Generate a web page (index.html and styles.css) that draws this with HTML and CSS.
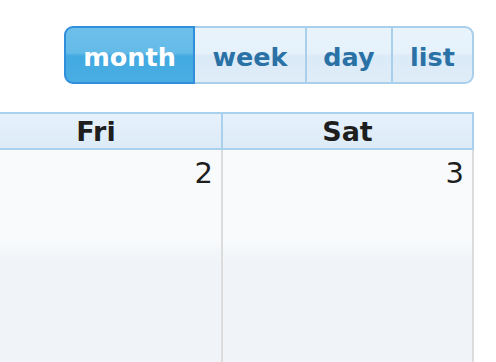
FILE: index.html
```html
<!DOCTYPE html>
<html>
<head>
<meta charset="utf-8">
<link rel="stylesheet" href="styles.css">
</head>
<body>
<div class="page">
  <div class="toolbar">
    <div class="btn-group">
      <button class="btn active">month</button>
      <button class="btn">week</button>
      <button class="btn">day</button>
      <button class="btn">list</button>
    </div>
  </div>
  <div class="calendar">
    <div class="row head">
      <div class="cell hcell">Fri</div>
      <div class="cell hcell">Sat</div>
    </div>
    <div class="row body">
      <div class="cell dcell"><span class="num">2</span></div>
      <div class="cell dcell"><span class="num">3</span></div>
    </div>
  </div>
</div>
</body>
</html>
```

FILE: styles.css
```css
html, body {
  margin: 0;
  padding: 0;
  background: #ffffff;
  overflow: hidden;
}
body {
  width: 496px;
  height: 362px;
  font-family: "DejaVu Sans", "Liberation Sans", sans-serif;
}
.page {
  width: 474px;
  display: flex;
  flex-direction: column;
  align-items: flex-end;
}
.toolbar {
  padding-top: 26px;
  height: 58px;
}
.btn-group {
  display: flex;
  height: 58px;
}
.btn {
  box-sizing: border-box;
  font-family: inherit;
  font-weight: bold;
  font-size: 25.5px;
  color: #2a72a6;
  height: 58px;
  margin: 0 0 0 -2px;
  padding: 3px 0 0 0;
  border: 2px solid #a9cfea;
  background: linear-gradient(to bottom, #e8f3fc 0%, #e6f2fb 46%, #dbeaf7 52%, #dfedf8 100%);
  position: relative;
}
.btn:nth-child(1) { width: 131px; margin-left: 0; border-radius: 9px 0 0 9px; }
.btn:nth-child(2) { width: 114px; }
.btn:nth-child(3) { width: 88px; }
.btn:nth-child(4) { width: 83px; border-radius: 0 9px 9px 0; }
.btn.active {
  color: #ffffff;
  border-color: #2f8fdb;
  background: linear-gradient(to bottom, #6cc0ea 0%, #64bbe8 46%, #42a9e1 52%, #4aaee3 100%);
  z-index: 1;
}
.calendar {
  margin-top: 28px;
  display: flex;
  flex-direction: column;
  align-items: flex-end;
}
.row {
  display: flex;
}
.cell {
  width: 251px;
  box-sizing: border-box;
  flex: none;
}
.head .hcell {
  height: 38px;
  border-top: 2px solid #a9d0ec;
  border-bottom: 2px solid #a9d0ec;
  border-right: 2px solid #a9d0ec;
  background: linear-gradient(to bottom, #e6f1fb, #dcebf7);
  text-align: center;
  font-weight: bold;
  font-size: 27px;
  line-height: 36px;
  color: #1e1e1e;
}
.head .hcell:first-child { width: 252px; }
.body .dcell {
  height: 213px;
  border-right: 2px solid #dcdcdc;
  background: linear-gradient(to bottom, #f8fafc 0px, #f8fafc 90px, #f0f4f8 112px, #f0f4f8 100%);
  text-align: right;
  padding: 5px 8px 0 0;
  font-size: 29px;
  line-height: 36px;
  color: #1e1e1e;
}
.body .dcell:first-child { width: 252px; }
```
